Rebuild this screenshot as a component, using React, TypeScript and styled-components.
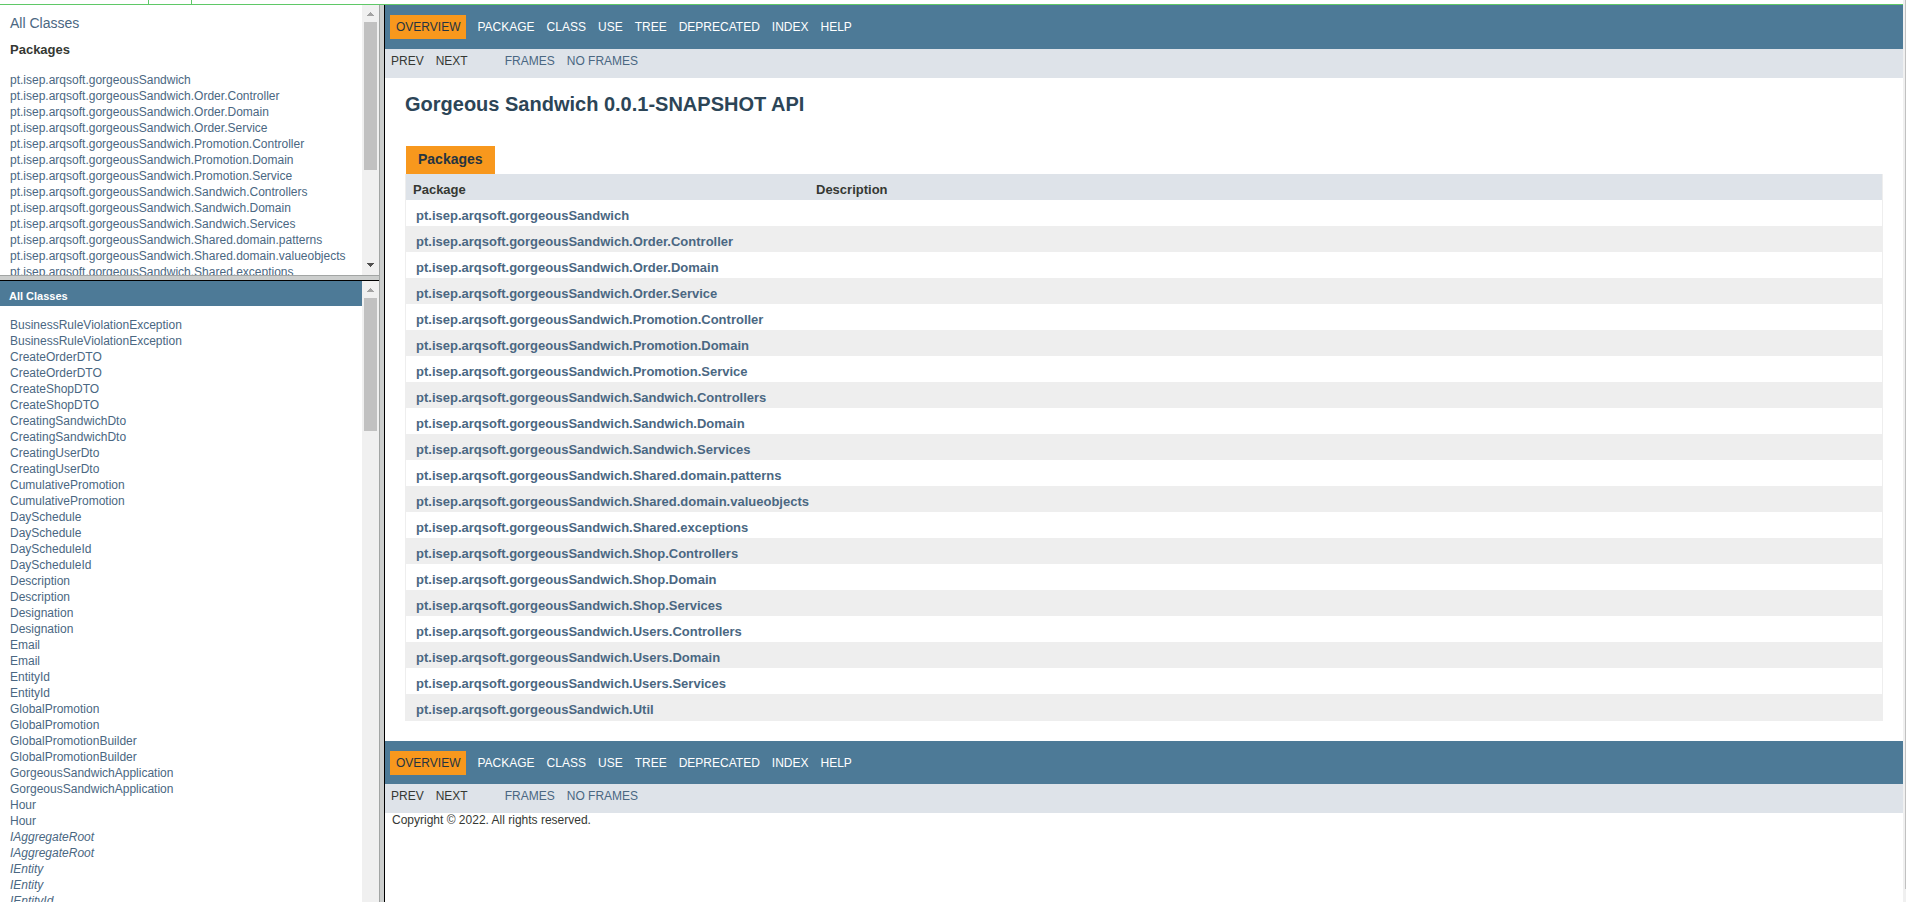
import React from "react";
import styled, { createGlobalStyle, css } from "styled-components";

const color = {
  text: "#353833",
  link: "#4a6782",
  bar: "#4d7a97",
  subBar: "#dee3e9",
  accent: "#f8981d",
  border: "#eeeeee",
  title: "#2c4557",
};

const GlobalStyle = createGlobalStyle`
  * { box-sizing: border-box; }
  body {
    margin: 0;
    background: #fff;
    color: ${color.text};
    font-family: "Liberation Sans", Arial, Helvetica, sans-serif;
    font-size: 14px;
    line-height: 16px;
  }
  a { color: ${color.link}; text-decoration: none; }
  a:hover { color: #bb7a2a; }
`;

const Window = styled.div`
  display: flex;
  height: 100vh;
  overflow: hidden;
`;

const Viewport = styled.div`
  flex: 1;
  min-width: 0;
`;

const TabStrip = styled.div`
  display: flex;
  height: 5px;
  padding-left: 148px;
  border-bottom: 1px solid #5fc867;
`;

const TabOutline = styled.div`
  width: 44px;
  border: solid #5fc867;
  border-width: 0 1px;
`;

const Frameset = styled.div`
  display: flex;
  height: calc(100vh + 7px);
`;

const Sidebar = styled.div`
  display: flex;
  flex-direction: column;
  flex: 0 0 379px;
`;

const Frame = styled.section<{ $height?: number }>`
  display: flex;
  min-height: 0;
  flex: ${(p) => (p.$height ? `0 0 ${p.$height}px` : "1")};
`;

const FrameBody = styled.div`
  flex: 1;
  min-width: 0;
  overflow: hidden;
`;

const RowSplitter = styled.div`
  flex: 0 0 6px;
  background: #cccecd;
  border-top: 1px solid #a2a5a4;
  border-bottom: 1px solid #000;
`;

const ColumnSplitter = styled.div`
  flex: 0 0 6px;
  background: #cccecd;
  border-left: 1px solid #a2a5a4;
  border-right: 1px solid #000;
`;

const Track = styled.div`
  display: flex;
  flex-direction: column;
  flex: 0 0 17px;
  background: #f0f0f0;
`;

const Thumb = styled.div<{ $height: number }>`
  height: ${(p) => p.$height}px;
  margin: 0 2px;
  background: #c1c1c1;
`;

const ArrowButton = styled.button`
  display: flex;
  align-items: center;
  justify-content: center;
  width: 17px;
  height: 17px;
  padding: 0;
  border: 0;
  background: none;
  &:last-child {
    margin-top: auto;
    padding-bottom: 3px;
  }
`;

const PageTrack = styled.div`
  flex: 0 0 3px;
  padding: 0 0 13px 2px;
  background: #f0f0f0;
`;

const PageThumb = styled.div`
  height: 100%;
  background: #c1c1c1;
`;

const PackagePane = styled(FrameBody)`
  padding: 10px 10px 0;
`;

const PaneHeading = styled.h2`
  margin: 11px 0 15px;
  font-size: 13px;
  line-height: 15px;
`;

const ClassesBar = styled.h1`
  margin: 0 0 11px;
  padding: 9px 9px 3px;
  background: ${color.bar};
  color: #fff;
  font-size: 11px;
  line-height: 13px;
`;

const LinkList = styled.ul<{ $inset?: boolean }>`
  margin: 0;
  padding: ${(p) => (p.$inset ? "0 10px" : "0")};
  list-style: none;
  font-size: 12px;
  line-height: 16px;
  white-space: nowrap;
`;

const ClassLink = styled.a<{ $isInterface: boolean }>`
  font-style: ${(p) => (p.$isInterface ? "italic" : "normal")};
`;

const Main = styled.main`
  flex: 1;
  min-width: 0;
  overflow: hidden;
`;

const navRow = css`
  display: flex;
  font-size: 12px;
  line-height: 14px;
  text-transform: uppercase;
`;

const TopNav = styled.nav<{ $footer?: boolean }>`
  ${navRow}
  align-items: flex-start;
  height: ${(p) => (p.$footer ? 43 : 44)}px;
  padding-top: 10px;
  background: ${color.bar};
  color: #fff;
  a { color: #fff; }
`;

const NavItem = styled.span<{ $current?: boolean }>`
  padding: 5px 6px;
  ${(p) =>
    p.$current &&
    css`
      margin: 0 5px;
      background: ${color.accent};
      color: #253441;
    `}
`;

const SubNav = styled.div`
  ${navRow}
  gap: 25px;
  height: 29px;
  background: ${color.subBar};
`;

const SubNavGroup = styled.div`
  display: flex;
`;

const Title = styled.h1`
  margin: 0;
  padding: 15px 20px 30px;
  color: ${color.title};
  font-size: 20px;
  line-height: 23px;
`;

const TableArea = styled.div`
  padding: 0 20px 20px;
`;

const PackageTable = styled.table`
  width: 100%;
  table-layout: fixed;
  border: solid ${color.border};
  border-width: 0 1px 1px;
  border-spacing: 0;
  font-size: 13px;
  line-height: 15px;
`;

const Caption = styled.caption`
  padding-left: 1px;
  text-align: left;
`;

const CaptionTab = styled.span`
  display: inline-block;
  padding: 5px 12px 7px;
  background: ${color.accent};
  color: #253441;
  font-size: 14px;
  font-weight: bold;
  line-height: 16px;
  vertical-align: top;
`;

const HeadCell = styled.th<{ $width?: number }>`
  width: ${(p) => (p.$width ? `${p.$width}px` : "auto")};
  padding: 8px 3px 3px 7px;
  background: ${color.subBar};
  text-align: left;
`;

const BodyRow = styled.tr`
  &:nth-child(even) { background: ${color.border}; }
`;

const NameCell = styled.th`
  padding: 8px 3px 3px 10px;
  text-align: left;
`;

const Copyright = styled.small`
  display: block;
  padding: 0 7px;
  font-size: 12px;
  line-height: 14px;
`;

const root = "pt.isep.arqsoft.gorgeousSandwich";

const packages = [
  "",
  ".Order.Controller",
  ".Order.Domain",
  ".Order.Service",
  ".Promotion.Controller",
  ".Promotion.Domain",
  ".Promotion.Service",
  ".Sandwich.Controllers",
  ".Sandwich.Domain",
  ".Sandwich.Services",
  ".Shared.domain.patterns",
  ".Shared.domain.valueobjects",
  ".Shared.exceptions",
  ".Shop.Controllers",
  ".Shop.Domain",
  ".Shop.Services",
  ".Users.Controllers",
  ".Users.Domain",
  ".Users.Services",
  ".Util",
].map((suffix) => root + suffix);

const classNames = [
  "BusinessRuleViolationException",
  "CreateOrderDTO",
  "CreateShopDTO",
  "CreatingSandwichDto",
  "CreatingUserDto",
  "CumulativePromotion",
  "DaySchedule",
  "DayScheduleId",
  "Description",
  "Designation",
  "Email",
  "EntityId",
  "GlobalPromotion",
  "GlobalPromotionBuilder",
  "GorgeousSandwichApplication",
  "Hour",
  "IAggregateRoot",
  "IEntity",
];

const classes = [...classNames.flatMap((name) => [name, name]), "IEntityId"];

// The package pane only renders the rows that fit in its frame.
const panePackages = packages.slice(0, 13);

const isInterface = (name: string) => /^I[A-Z]/.test(name);

const Scrollbar = ({ thumb }: { thumb: number }) => (
  <Track>
    <ArrowButton type="button" aria-label="Scroll up">
      <svg width="7" height="4" viewBox="0 0 7 4" shapeRendering="crispEdges">
        <path d="M3 0h1v1h1v1h1v1h1v1H0V3h1V2h1V1h1z" fill="#a3a3a3" />
      </svg>
    </ArrowButton>
    <Thumb $height={thumb} />
    <ArrowButton type="button" aria-label="Scroll down">
      <svg width="7" height="4" viewBox="0 0 7 4" shapeRendering="crispEdges">
        <path d="M0 0h7v1H6v1H5v1H4v1H3V3H2V2H1V1H0z" fill="#505050" />
      </svg>
    </ArrowButton>
  </Track>
);

const Navigation = ({ footer }: { footer?: boolean }) => (
  <>
    <TopNav $footer={footer} aria-label={footer ? "Footer" : "Header"}>
      <NavItem $current>Overview</NavItem>
      <NavItem>Package</NavItem>
      <NavItem>Class</NavItem>
      <NavItem>Use</NavItem>
      {["Tree", "Deprecated", "Index", "Help"].map((label) => (
        <NavItem key={label}>
          <a href={`#${label.toLowerCase()}`}>{label}</a>
        </NavItem>
      ))}
    </TopNav>
    <SubNav>
      <SubNavGroup>
        <NavItem>Prev</NavItem>
        <NavItem>Next</NavItem>
      </SubNavGroup>
      <SubNavGroup>
        <NavItem>
          <a href="#frames">Frames</a>
        </NavItem>
        <NavItem>
          <a href="#no-frames">No Frames</a>
        </NavItem>
      </SubNavGroup>
    </SubNav>
  </>
);

export default function App() {
  return (
    <Window>
      <GlobalStyle />
      <Viewport>
        <TabStrip>
          <TabOutline />
        </TabStrip>
        <Frameset>
          <Sidebar>
            <Frame $height={270}>
              <PackagePane>
                <a href="#all-classes">All Classes</a>
                <PaneHeading>Packages</PaneHeading>
                <LinkList>
                  {panePackages.map((name) => (
                    <li key={name}>
                      <a href={`#${name}`}>{name}</a>
                    </li>
                  ))}
                </LinkList>
              </PackagePane>
              <Scrollbar thumb={148} />
            </Frame>
            <RowSplitter />
            <Frame>
              <FrameBody>
                <ClassesBar>All Classes</ClassesBar>
                <LinkList $inset>
                  {classes.map((name, i) => (
                    <li key={i}>
                      <ClassLink href={`#${name}`} $isInterface={isInterface(name)}>
                        {name}
                      </ClassLink>
                    </li>
                  ))}
                </LinkList>
              </FrameBody>
              <Scrollbar thumb={133} />
            </Frame>
          </Sidebar>
          <ColumnSplitter />
          <Main>
            <Navigation />
            <Title>Gorgeous Sandwich 0.0.1-SNAPSHOT API</Title>
            <TableArea>
              <PackageTable>
                <Caption>
                  <CaptionTab>Packages</CaptionTab>
                </Caption>
                <thead>
                  <tr>
                    <HeadCell scope="col" $width={403}>
                      Package
                    </HeadCell>
                    <HeadCell scope="col">Description</HeadCell>
                  </tr>
                </thead>
                <tbody>
                  {packages.map((name) => (
                    <BodyRow key={name}>
                      <NameCell scope="row">
                        <a href={`#${name}`}>{name}</a>
                      </NameCell>
                      <td />
                    </BodyRow>
                  ))}
                </tbody>
              </PackageTable>
            </TableArea>
            <Navigation footer />
            <Copyright>Copyright © 2022. All rights reserved.</Copyright>
          </Main>
        </Frameset>
      </Viewport>
      <PageTrack>
        <PageThumb />
      </PageTrack>
    </Window>
  );
}
